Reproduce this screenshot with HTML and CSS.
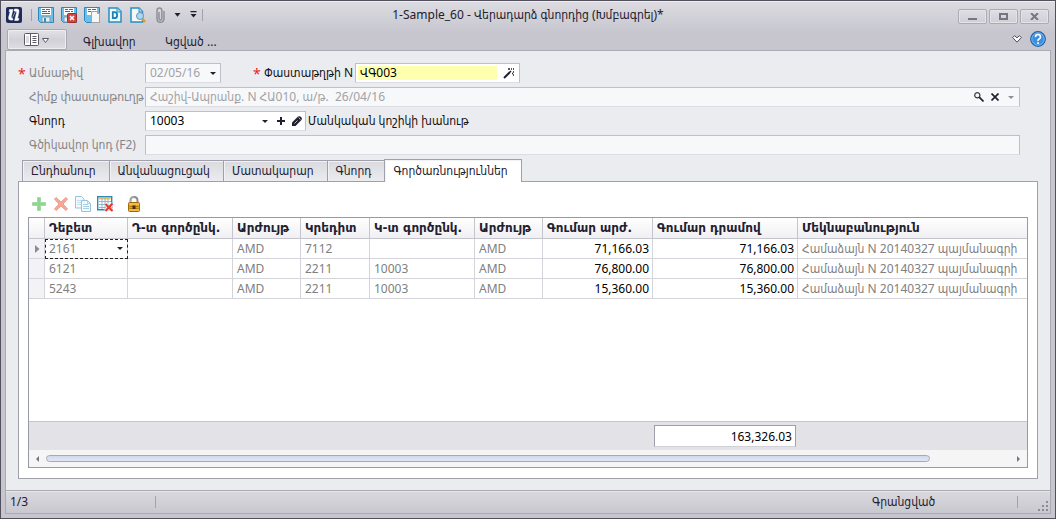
FILE: index.html
```html
<!DOCTYPE html>
<html lang="hy">
<head>
<meta charset="utf-8">
<title>1-Sample_60 - Վերադարձ գնորդից (Խմբագրել)*</title>
<link rel="stylesheet" href="styles.css">
</head>
<body>
<div class="window">
  <header class="titlebar">
    <div class="quick">
      <svg class="logo" width="16" height="16" viewBox="0 0 16 16"><rect width="16" height="16" rx="2" fill="#1d2b58"/><path d="M3.500 2.500H7L5.200 9.800Q5 11.500 6.500 11.300L7 13H4.500Q2 13 2.700 10L4.200 4.500H3zM8.500 2H11Q13.500 2.200 12.900 5L11.600 11.500H13L12.300 13.500H8.600L10.600 5.500Q10.800 4 9.500 4H8zM6.500 10.500 9.700 4" fill="#fff" stroke="#fff" stroke-width=".5"/></svg>
      <i class="sep"></i>
      <button class="ic" aria-label="Save"><svg width="16" height="16" viewBox="0 0 16 16"><path d="M.5.500h15v15H2.500l-2-2z" fill="#6cc0ea" stroke="#2a88bd"/><path d="M3 1h10v7H3z" fill="#fff"/><path d="M4 2.500h3M8 2.500h4M4 4.500h5M10 4.500h2M4 6.500h8" stroke="#5b6672"/><path d="M4 10h8v5H4z" fill="#e8edf0" stroke="#8a9aa5"/><path d="M6 11h2v4H6z" fill="#3b8dba"/></svg></button>
      <button class="ic" aria-label="Save and close"><svg width="16" height="16" viewBox="0 0 16 16"><path d="M.5.500h15v15H2.500l-2-2z" fill="#6cc0ea" stroke="#2a88bd"/><path d="M3 1h10v7H3z" fill="#fff"/><path d="M4 2.500h3M8 2.500h4M4 4.500h5M10 4.500h2" stroke="#5b6672"/><path d="M3 10h4v5H3z" fill="#e8edf0" stroke="#8a9aa5"/><rect x="6.500" y="6.500" width="9" height="9" rx="1" fill="#d2473f" stroke="#a12a2a"/><path d="m9 9 4 4m0-4-4 4" stroke="#fff" stroke-width="1.500"/></svg></button>
      <button class="ic" aria-label="Save and new"><svg width="16" height="16" viewBox="0 0 16 16"><path d="M.5.500h15v15H2.500l-2-2z" fill="#6cc0ea" stroke="#2a88bd"/><path d="M3 1h10v7H3z" fill="#fff"/><path d="M4 2.500h3M8 2.500h4M4 4.500h3" stroke="#5b6672"/><path d="M7.500 4.500h6l2 2v9h-8z" fill="#f7f7f7" stroke="#a3a3a3"/><path d="M13.500 4.500v2h2" fill="none" stroke="#a3a3a3"/></svg></button>
      <button class="ic" aria-label="Document"><svg width="16" height="16" viewBox="0 0 16 16"><path d="M2 1h8.500L14 4.500V15H2z" fill="#f2faff" stroke="#2590c4" stroke-width="1.500"/><path d="M10 1v4h4" fill="#b5dcf0" stroke="#2590c4"/><path d="M5.800 5.200v6h1.400q3 0 3-3t-3-3z" fill="none" stroke="#1d80b5" stroke-width="1.800"/></svg></button>
      <button class="ic" aria-label="Preview"><svg width="16" height="16" viewBox="0 0 16 16"><path d="M1 1h8l3.500 3.500V15H1z" fill="#f2faff" stroke="#2590c4" stroke-width="1.500"/><path d="M9 1v4h3.500" fill="#b5dcf0" stroke="#2590c4"/><circle cx="10" cy="9" r="3.500" fill="#a9d8f4" stroke="#7594a7"/><path d="m12.500 12 2.500 3" stroke="#e09a28" stroke-width="2.500"/></svg></button>
      <button class="ic" aria-label="Attach"><svg width="16" height="16" viewBox="0 0 16 16"><path d="M6 5v6.500q0 1.500 1.400 1.500t1.500-1.500V4q0-3-2.500-3T4 4v7.500Q4 15.300 7.400 15.300T11 11.500V4" fill="none" stroke="#8d9298" stroke-width="1.500"/></svg></button>
      <button class="mini drop" aria-label="Attach menu"><svg width="7" height="4" viewBox="0 0 7 4"><path d="M.5 0h6L3.500 3.800z" fill="#222030"/></svg></button>
      <button class="mini more" aria-label="Customize"><svg width="7" height="7" viewBox="0 0 7 7"><path d="M.5 0h6v1.200h-6zM.5 3h6L3.500 6.500z" fill="#222030"/></svg></button>
      <i class="sep end"></i>
    </div>
    <h1>1-Sample_60 - Վերադարձ գնորդից (Խմբագրել)*</h1>
    <div class="winbtns">
      <button aria-label="Minimize"><svg width="9" height="7" viewBox="0 0 9 7"><path d="M0 5h9v2H0z" fill="#777583"/></svg></button>
      <button aria-label="Maximize"><svg width="9" height="7" viewBox="0 0 9 7"><path d="M1 1h7v5H1z" fill="none" stroke="#777583" stroke-width="2"/></svg></button>
      <button aria-label="Close"><svg width="9" height="7" viewBox="0 0 9 7"><path d="m1 0 7 7M8 0 1 7" stroke="#777583" stroke-width="2"/></svg></button>
    </div>
  </header>
  <nav class="ribbon">
    <button class="app" aria-label="Menu"><svg width="26" height="13" viewBox="0 0 26 13"><rect x=".5" y=".5" width="14" height="12" rx="1" fill="#fff" stroke="#5c5a66"/><path d="M6.500 1v11M8.500 3.500h4M8.500 5.500h4M8.500 7.500h4M8.500 9.500h4" stroke="#5c5a66"/><path d="M2 3h3v7H2z" fill="#dddde2"/><path d="M18.500 5.500h6L21.500 9.500z" fill="#fff" stroke="#5c5a66"/></svg></button>
    <a href="#main">Գլխավոր</a>
    <a href="#attached">Կցված ...</a>
    <span class="fill"></span>
    <button class="plain" aria-label="Collapse"><svg width="10" height="8" viewBox="0 0 10 8"><path d="M.7 2.500 2.500.7 5 2.800 7.500.7l1.800 1.800L5 7.200z" fill="#fff" stroke="#4d4b58"/></svg></button>
    <button class="plain" aria-label="Help"><svg width="16" height="16" viewBox="0 0 16 16"><circle cx="8" cy="8" r="7.300" fill="#3d8fe0" stroke="#1e60a8" stroke-width="1.200"/><circle cx="8" cy="8" r="6.200" fill="none" stroke="#86bdf0" stroke-width=".8"/><path d="M5.500 6q0-2.500 2.500-2.500T10.500 6q0 1.200-1.400 2T8 10" fill="none" stroke="#fff" stroke-width="1.600"/><path d="M7.200 11.300h1.700V13H7.200z" fill="#fff"/></svg></button>
  </nav>
  <main class="content">
    <form class="form">
      <div class="row">
        <span class="req">*</span><label class="lbl dim" for="date">Ամսաթիվ</label>
        <div class="field off date"><input id="date" value="02/05/16" disabled><button type="button" class="mini" aria-label="Pick date"><svg width="6" height="3" viewBox="0 0 6 3"><path d="M0 0h6L3 3z" fill="#222030"/></svg></button></div>
        <span class="req second">*</span><label class="lbl2" for="num">Փաստաթղթի N</label>
        <div class="field num"><input id="num" class="hot" value="ՎԳ003"><button type="button" class="tool wand" aria-label="Generate"><svg width="12" height="11" viewBox="0 0 12 11"><path d="m1 10 6-6" stroke="#222030" stroke-width="2"/><path d="m7 4 1-1M5 1h2M10 1h1M8 1h1M10 4h1M10 7h1M9 5.500h1" stroke="#222030" stroke-width="1.500"/></svg></button></div>
      </div>
      <div class="row">
        <label class="lbl dim" for="base">Հիմք փաստաթուղթ</label>
        <div class="field off wide"><input id="base" value="Հաշիվ-Ապրանք. N ՀԱ010, ա/թ.&nbsp; 26/04/16" disabled><button type="button" class="tool" aria-label="Find"><svg width="10" height="10" viewBox="0 0 10 10"><circle cx="3.300" cy="3.300" r="2.600" fill="none" stroke="#3a3846" stroke-width="1.200"/><path d="m5.200 5.200 4.300 4.300" stroke="#222030" stroke-width="1.700"/></svg></button><button type="button" class="tool" aria-label="Clear"><svg width="8" height="8" viewBox="0 0 8 8"><path d="m.5.500 7 7m0-7-7 7" stroke="#222030" stroke-width="1.700"/></svg></button><button type="button" class="tool last" aria-label="List"><svg width="6" height="3" viewBox="0 0 6 3"><path d="M0 0h6L3 3z" fill="#8f8e98"/></svg></button></div>
      </div>
      <div class="row">
        <label class="lbl" for="buyer">Գնորդ</label>
        <div class="field buyer"><input id="buyer" value="10003"><button type="button" class="tool" aria-label="List"><svg width="6" height="3" viewBox="0 0 6 3"><path d="M0 0h6L3 3z" fill="#222030"/></svg></button><button type="button" class="tool" aria-label="Add"><svg width="8" height="8" viewBox="0 0 8 8"><path d="M4 0v8M0 4h8" stroke="#222030" stroke-width="2"/></svg></button><button type="button" class="tool" aria-label="Edit"><svg width="10" height="10" viewBox="0 0 10 10"><path d="M0 10V6.500L6 .6Q7.500-.5 9 1t.4 3L3.500 10z" fill="#222030"/><path d="m2.500 7.500 3-3M6.500 1.500l2 2" stroke="#fff" stroke-width=".7"/></svg></button></div>
        <span class="after">Մանկական կոշիկի խանութ</span>
      </div>
      <div class="row">
        <label class="lbl dim" for="bar">Գծիկավոր կոդ (F2)</label>
        <div class="field off wide"><input id="bar" disabled></div>
      </div>
    </form>
    <div class="tabs" role="tablist">
      <button role="tab">Ընդհանուր</button><button role="tab">Անվանացուցակ</button><button role="tab">Մատակարար</button><button role="tab">Գնորդ</button><button role="tab" class="on" aria-selected="true">Գործառնություններ</button>
    </div>
    <section class="panel">
      <div class="toolbar">
        <button class="ic" aria-label="Add row"><svg width="16" height="16" viewBox="0 0 16 16"><path d="M6.500 1.500h3v5h5v3h-5v5h-3v-5h-5v-3h5z" fill="#90d492" stroke="#a0dba2"/></svg></button>
        <button class="ic" aria-label="Delete row"><svg width="16" height="16" viewBox="0 0 16 16"><path d="M3 1.500 8 6l5-4.500L14.500 3 10 8l4.500 5-1.500 1.500L8 10l-5 4.500L1.500 13 6 8 1.500 3z" fill="#f3aa97" stroke="#f09a86"/></svg></button>
        <button class="ic" aria-label="Copy row"><svg width="16" height="16" viewBox="0 0 16 16"><path d="M.5.500h6l2.500 2.500v9H.5z" fill="#f3f9fd" stroke="#94c4e1"/><path d="M2 4.500h4M2 6.500h4M2 8.500h4" stroke="#c4e0f0"/><path d="M6.500 4.500h6L15.500 7.500v8h-9z" fill="#f3f9fd" stroke="#94c4e1"/><path d="M8 8.500h5M8 10.500h6M8 12.500h6M12.500 4.500v3h3" fill="none" stroke="#a8d0e8"/></svg></button>
        <button class="ic" aria-label="Clear table"><svg width="17" height="16" viewBox="0 0 17 16"><path d="M.7.700h14v13H.7z" fill="#fff" stroke="#2c88bb" stroke-width="1.400"/><path d="M2 2h11.500v1.500H2z" fill="#f5c14f"/><path d="M2 5.500h12M2 8.500h12M2 11.500h12M5 2v11M8 2v11M11 2v11" stroke="#8fb6cd"/><path d="m8.500 8 7 7m0-7.500L8.500 15" stroke="#fff" stroke-width="3.500"/><path d="m8.500 8 7 7m0-7.500L8.500 15" stroke="#e8392d" stroke-width="2.200"/></svg></button>
        <button class="ic lock" aria-label="Lock"><svg width="12" height="16" viewBox="0 0 12 16"><path d="M2.500 7V4.500Q2.500 1 6 1t3.500 3.500V7" fill="none" stroke="#8b8b8b" stroke-width="2"/><path d="M2.500 7V4.500Q2.500 1 6 1" fill="none" stroke="#c9c9c9" stroke-width=".7"/><rect x=".5" y="6.500" width="11" height="9" rx="1" fill="#e5a51d" stroke="#a16a0c"/><path d="M1 8h10M1 14h10" stroke="#ffd36b"/><path d="M1.500 10.500h9M1.500 12.500h9" stroke="#b67a10"/><path d="M4.500 9.500h3v3.500h-3z" fill="#3e3321"/></svg></button>
      </div>
      <div class="grid">
        <div class="rows">
        <table>
          <colgroup><col class="c0"><col class="c1"><col class="c2"><col class="c3"><col class="c4"><col class="c2"><col class="c3"><col class="c5"><col class="c6"><col></colgroup>
          <thead><tr><th></th><th>Դեբետ</th><th>Դ-տ գործընկ.</th><th>Արժույթ</th><th>Կրեդիտ</th><th>Կ-տ գործընկ.</th><th>Արժույթ</th><th>Գումար արժ.</th><th>Գումար դրամով</th><th>Մեկնաբանություն</th></tr></thead>
          <tbody>
            <tr><td><svg width="5" height="8" viewBox="0 0 5 8"><path d="M0 0 4.500 4 0 8z" fill="#8b8a96"/></svg></td><td class="focus"><div class="cell"><span>2161</span><svg width="6" height="3" viewBox="0 0 6 3"><path d="M0 0h6L3 3z" fill="#222030"/></svg></div></td><td></td><td>AMD</td><td>7112</td><td></td><td>AMD</td><td class="n">71,166.03</td><td class="n">71,166.03</td><td>Համաձայն N 20140327 պայմանագրի</td></tr>
            <tr><td></td><td>6121</td><td></td><td>AMD</td><td>2211</td><td>10003</td><td>AMD</td><td class="n">76,800.00</td><td class="n">76,800.00</td><td>Համաձայն N 20140327 պայմանագրի</td></tr>
            <tr><td></td><td>5243</td><td></td><td>AMD</td><td>2211</td><td>10003</td><td>AMD</td><td class="n">15,360.00</td><td class="n">15,360.00</td><td>Համաձայն N 20140327 պայմանագրի</td></tr>
          </tbody>
        </table>
        </div>
        <div class="totals"><output>163,326.03</output></div>
        <div class="scroll">
          <button aria-label="Left"><svg width="3" height="6" viewBox="0 0 3 6"><path d="M3 0v6L0 3z" fill="#777583"/></svg></button>
          <div class="track"><div class="thumb"></div></div>
          <button aria-label="Right"><svg width="3" height="6" viewBox="0 0 3 6"><path d="M0 0v6l3-3z" fill="#777583"/></svg></button>
        </div>
      </div>
    </section>
  </main>
  <footer class="status">
    <span class="pos">1/3</span><i class="sep"></i>
    <span class="fill"></span>
    <span class="state">Գրանցված</span><i class="sep"></i>
    <svg class="grip" width="11" height="11" viewBox="0 0 11 11"><path d="M8 0h2v2H8zM8 4h2v2H8zM4 4h2v2H4zM8 8h2v2H8zM4 8h2v2H4zM0 8h2v2H0z" fill="#8b8a96"/></svg>
  </footer>
</div>
</body>
</html>
```
FILE: styles.css
```css
* { box-sizing: border-box; }
body {
  margin: 0;
  font: 12px/16px "Noto Sans", "DejaVu Sans Condensed", "DejaVu Sans", sans-serif;
  color: #222030;
}
button { margin: 0; padding: 0; border: 0; background: none; font: inherit; color: inherit; }
input { font: inherit; color: inherit; }
svg { display: block; flex: none; }
.fill { flex: 1; }

.window {
  display: flex;
  flex-direction: column;
  min-height: 100vh;
  padding: 0 4px 4px;
  border: 1px solid #53505d;
  background: linear-gradient(#dcdce1, #c7c6cf 32px);
  box-shadow: inset 0 1px #eeeef2;
}

.titlebar {
  display: grid;
  grid-template-columns: 1fr auto 1fr;
  align-items: center;
  height: 27px;
}
.titlebar h1 { margin: 0; font-size: 12px; font-weight: normal; }
.quick { display: flex; align-items: center; gap: 7px; padding-left: 1px; }
.quick .sep { margin: 0 -1px 0 2px; }
.sep { width: 1px; height: 12px; background: #a2a1ac; }
.ic { display: flex; }
.mini { display: flex; justify-content: center; width: 7px; }
.drop { margin-left: -2px; }
.more { margin-left: 2px; }
.quick .end { margin: 0 0 0 -2px; }
.winbtns { display: flex; justify-content: flex-end; gap: 2px; padding: 4px 2px 0 0; }
.winbtns button {
  display: flex;
  align-items: center;
  justify-content: center;
  width: 29px;
  height: 15px;
  border: 1px solid #acabb5;
  border-radius: 2px;
  background: linear-gradient(#dedee3, #cfced6);
  box-shadow: inset 0 0 0 1px #e4e4e8;
}

.ribbon { display: flex; align-items: center; gap: 8px; height: 22px; padding: 0 5px 0 2px; }
.ribbon .app {
  display: flex;
  align-items: center;
  justify-content: center;
  width: 60px;
  height: 21px;
  margin-right: 8px;
  border: 1px solid #a9a8b2;
  border-radius: 2px;
  background: linear-gradient(#e2e2e7, #d2d1d9 50%, #dddde2);
  box-shadow: inset 0 0 0 1px #eeeef1;
}
.ribbon a { width: 74px; padding-top: 5px; color: inherit; text-decoration: none; }

.content {
  flex: 1;
  display: flex;
  flex-direction: column;
  padding: 12px 12px 11px;
  border: 1px solid #abaab4;
  border-bottom: 0;
  background: #ebecf0;
}
.form { display: flex; flex-direction: column; gap: 4px; padding-right: 18px; }
.row { display: flex; align-items: center; height: 20px; }
.lbl { width: 127px; padding-left: 11px; white-space: nowrap; color: #111; }
.req { width: 11px; color: #e22; font-size: 14px; line-height: 16px; padding-top: 2px; }
.req + .lbl { width: 116px; padding-left: 0; }
.second { margin-left: 32px; }
.lbl2 { width: 91px; white-space: nowrap; color: #111; }
.lbl.dim { color: #858588; }
.field {
  display: flex;
  align-items: center;
  height: 20px;
  border: 1px solid #c0bfc9;
  border-bottom-color: #dcdce2;
  background: #fff;
  color: #000;
}
.field input { flex: 1; min-width: 0; height: 16px; padding: 0 4px; border: 0; outline: 0; background: none; }
.field.off { background: #f7f8fa; color: #a2a2a6; }
.date { width: 76px; }
.date .mini { margin-right: 4px; }
.num { width: 165px; }
.field .hot { margin: 2px; padding: 0 2px; height: 14px; background: #ffffb0; }
.wide { flex: 1; }
.tool { display: flex; align-items: center; justify-content: center; width: 16px; }
.field .wand { width: 20px; }
.buyer { width: 161px; }
.after { padding-left: 2px; color: #111; }

.tabs { display: flex; align-items: flex-end; margin-top: 4px; padding-left: 4px; height: 23px; }
.tabs button {
  height: 21px;
  padding: 0 13px 0 8px;
  margin-bottom: 1px;
  border: 1px solid #a09fac;
  border-width: 1px 0 0 1px;
  background: linear-gradient(#d9d9de, #ebecf0);
  box-shadow: inset 1px 1px #f2f2f5;
}
.tabs .on { z-index: 1; height: 23px; margin-bottom: 0; border-right-width: 1px; background: #fff; }
.panel {
  flex: 1;
  display: flex;
  flex-direction: column;
  margin-top: -1px;
  padding: 14px 9px 10px;
  border: 1px solid #a09fac;
  background: #fff;
}
.toolbar { display: flex; gap: 6px; padding: 0 3px 5px; }
.toolbar .lock { margin-left: 8px; }

.grid { flex: 1; display: flex; flex-direction: column; border: 1px solid #9998a5; }
.rows { flex: 1; overflow: hidden; }
table { width: 100%; table-layout: fixed; border-collapse: separate; border-spacing: 0; }
th, td {
  height: 20px;
  padding: 0 4px;
  border-right: 1px solid #d4d4da;
  border-bottom: 1px solid #d4d4da;
  text-align: left;
  white-space: nowrap;
  overflow: hidden;
}
th {
  height: 21px;
  border-color: #c5c5cd;
  background: linear-gradient(#fff, #f0f0f3);
  font-family: "DejaVu Sans", sans-serif;
  font-weight: bold;
}
td { color: #808080; }
th:last-child, td:last-child { border-right: 0; }
td:first-child { padding-left: 6px; background: #f3f3f6; }
td.n { padding-right: 3px; text-align: right; color: #000; }
.cell { display: flex; align-items: center; justify-content: space-between; }
.focus { outline: 1px dashed #222; outline-offset: -1px; }
.c0 { width: 16px; } .c1 { width: 83px; } .c2 { width: 105px; } .c3 { width: 68px; }
.c4 { width: 69px; } .c5 { width: 110px; } .c6 { width: 145px; }
.totals {
  display: flex;
  height: 29px;
  padding: 3px 0 0 625px;
  border-top: 1px solid #c5c5cd;
  background: #e3e2e7;
}
.totals output {
  width: 142px;
  height: 22px;
  padding: 3px 3px;
  border: 1px solid #9f9eaa;
  border-bottom-color: #d0d0d6;
  background: #fff;
  color: #000;
  text-align: right;
}
.scroll { display: flex; align-items: center; height: 17px; padding: 0 7px; background: #f5f5f6; }
.scroll .track { flex: 1; margin: 0 7px; }
.thumb {
  width: 91.7%;
  height: 7px;
  border: 1px solid #a9a9b6;
  border-radius: 4px;
  background: linear-gradient(#d3d9ea, #e2e7f5);
}

.status {
  display: flex;
  align-items: center;
  height: 24px;
  padding-left: 4px;
  border: 1px solid #abaab4;
  background: linear-gradient(#d9d9de, #c9c8d0);
  box-shadow: inset 0 1px #e6e6ea;
}
.status .pos { width: 145px; }
.status .state { width: 145px; }
.status .grip { margin: 8px 1px 0 20px; }
```
